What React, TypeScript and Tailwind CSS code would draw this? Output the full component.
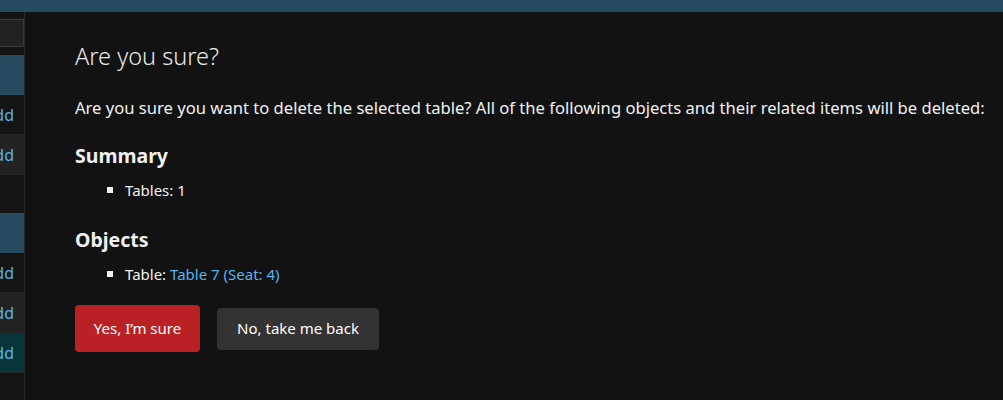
import React from "react";

export default function App() {
  const font = { fontFamily: '"Noto Sans", "Open Sans", sans-serif' };
  return (
    <div className="w-[1003px] h-[400px] bg-[#121212] overflow-hidden flex flex-col" style={font}>
      <div className="h-[12px] bg-[#264b5e] shrink-0" />
      <div className="flex flex-1 min-h-0">
        <div className="w-[25px] shrink-0 bg-[#141414] border-r border-[#2a2a2a] flex flex-col overflow-hidden">
          <div className="h-[7px] shrink-0" />
          <div className="h-[28px] shrink-0 bg-[#222222] border border-[#3a3a3a] border-l-0" />
          <div className="h-[8px] shrink-0" />
          <div className="h-[40px] shrink-0 bg-[#264b5e]" />
          <Row bg="bg-[#141414]" />
          <Row bg="bg-[#222222]" />
          <div className="h-[38px] shrink-0" />
          <div className="h-[40px] shrink-0 bg-[#264b5e]" />
          <Row bg="bg-[#141414]" />
          <Row bg="bg-[#222222]" />
          <Row bg="bg-[#063639]" />
        </div>
        <div className="flex-1 pl-[50px] pt-[28px] text-[#f0f0f0]">
          <h1 className="text-[23.5px] font-light leading-[32px] text-[#e8e8e8]">Are you sure?</h1>
          <p className="mt-[24px] text-[16.6px] leading-[24px] whitespace-nowrap">
            Are you sure you want to delete the selected table? All of the following objects and their related items will be deleted:
          </p>
          <h2 className="mt-[23px] text-[19.5px] font-bold leading-[26px]">Summary</h2>
          <ul className="mt-[10px] pl-[32px] text-[15px] leading-[22px]">
            <li className="flex items-center gap-[12px]">
              <span className="w-[6px] h-[6px] bg-[#f0f0f0] inline-block" />
              <span>Tables: 1</span>
            </li>
          </ul>
          <h2 className="mt-[26px] text-[19.5px] font-bold leading-[26px]">Objects</h2>
          <ul className="mt-[10px] pl-[32px] text-[15px] leading-[22px]">
            <li className="flex items-center gap-[12px]">
              <span className="w-[6px] h-[6px] bg-[#f0f0f0] inline-block" />
              <span>
                Table: <span className="text-[#5ab2ee]">Table 7 (Seat: 4)</span>
              </span>
            </li>
          </ul>
          <div className="mt-[20px] flex items-center gap-[17px]">
            <button className="w-[125px] h-[47px] rounded-[4px] bg-[#ba2124] text-white text-[15px]">
              Yes, I’m sure
            </button>
            <button className="w-[162px] h-[42px] rounded-[4px] bg-[#333333] text-white text-[15px]">
              No, take me back
            </button>
          </div>
        </div>
      </div>
    </div>
  );
}

function Row({ bg }: { bg: string }) {
  return (
    <div className={`h-[40px] shrink-0 ${bg} border-b border-[#262626] flex items-center justify-end text-[16px] text-[#5ab2ee] whitespace-nowrap`}>
      <span className="mr-[10px]">Add</span>
    </div>
  );
}
